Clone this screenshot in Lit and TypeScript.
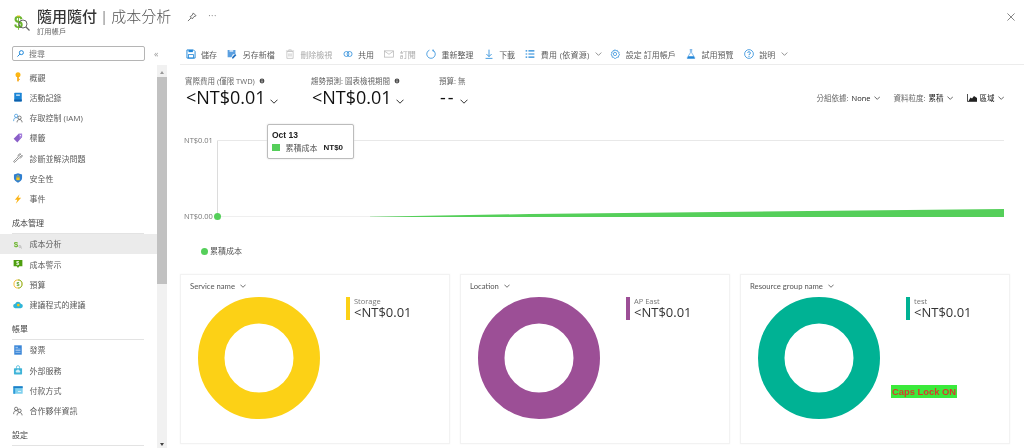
import { LitElement, html, css, svg } from "lit";
import { customElement } from "lit/decorators.js";

const chev = html`<svg class="chev" viewBox="0 0 8 5"><polyline points="0.5,0.7 4,4.2 7.5,0.7"></polyline></svg>`;

const info = html`<svg class="info" viewBox="0 0 8 8"><circle cx="4" cy="4" r="3.2" fill="#4a4a4a"></circle><rect x="3.5" y="3.4" width="1" height="2.6" fill="#fff"></rect><rect x="3.5" y="1.9" width="1" height="1" fill="#fff"></rect></svg>`;

const people = (a: string, b: string) => svg`
  <circle cx="5" cy="4.5" r="2.6" fill="none" stroke=${a} stroke-width="1.2"/>
  <path d="M1 13c0-4 1.5-5.5 4-5.5 1 0 1.6.2 2.2.7" fill="none" stroke=${a} stroke-width="1.2"/>
  <circle cx="10.5" cy="7.5" r="2.6" fill="none" stroke=${b} stroke-width="1.2"/>
  <path d="M6.5 15c0-3 1.500-4.500 4-4.500s4 1.500 4 4.500" fill="none" stroke=${b} stroke-width="1.2"/>`;

const navIcons: Record<string, unknown> = {
  key: svg`<circle cx="8" cy="4.500" r="4" fill="#fcb714"/><rect x="6.700" y="7" width="2.600" height="8" fill="#f7a40f"/><rect x="9" y="11" width="2" height="1.500" fill="#f7a40f"/>`,
  book: svg`<rect x="2" y="1" width="12" height="14" rx="1" fill="#1b85d6"/><rect x="2" y="12" width="12" height="3" fill="#0f5ea8"/><rect x="5" y="4" width="6" height="2" fill="#e6f3fc"/>`,
  iam: people("#3f97dc", "#555"),
  tag: svg`<path d="M9 1h5.500v5.500L7 15 1 9z" fill="#8a5fc8"/><path d="M9 1h5.500v5.500L11 10z" fill="#a57fdc"/><circle cx="11.800" cy="4" r="1" fill="#fff"/>`,
  wrench: svg`<path d="M14.500 3.500 12 6 10 4l2.500-2.500C10 .8 7.500 2.800 8.300 6L1.500 12.800a1.200 1.200 0 0 0 1.700 1.700L10 7.700c3 .8 5.200-1.700 4.500-4.200z" fill="#fff" stroke="#666" stroke-width="1.100"/>`,
  shield: svg`<path d="M8 .5 14.500 2.500V8c0 3.500-3 6-6.500 7.500C4.500 14 1.500 11.500 1.500 8V2.500z" fill="#2f7fd0"/><rect x="5.300" y="7" width="5.400" height="4.500" fill="#f5c518"/><path d="M6.300 7V5.800a1.700 1.700 0 0 1 3.400 0V7" fill="none" stroke="#f5c518" stroke-width="1"/>`,
  bolt: svg`<path d="M10.500.5 3 9h4l-2.500 6.500L13 6H8.500z" fill="#fbb416"/>`,
  cost: svg`<text x="1" y="12" class="dollar" fill="#6cb52d">$</text><circle cx="11" cy="12" r="1.600" fill="none" stroke="#999" stroke-width=".8"/><path d="m12.200 13.200 2 1.800" stroke="#999"/>`,
  alert: svg`<path d="M1 1.500h14v10H10l-2 3-2-3H1z" fill="#4f9f10"/><text x="5" y="10" class="dollar-s" fill="#fff">$</text>`,
  budget: svg`<circle cx="8" cy="8" r="6.500" fill="#fff" stroke="#f2b21b" stroke-width="1.400"/><path d="M8 1.500a6.500 6.500 0 0 1 0 13" fill="none" stroke="#7fba3a" stroke-width="1.400"/><text x="5.400" y="11.500" class="dollar-s" fill="#5f9f2a">$</text>`,
  cloud: svg`<path d="M4 13a3.500 3.500 0 0 1-.5-7A4.800 4.800 0 0 1 12.500 6 3.500 3.500 0 0 1 12 13z" fill="#2fb5d8"/><circle cx="8.500" cy="8" r="2.200" fill="#f5c518"/>`,
  invoice: svg`<rect x="2" y="0.500" width="12" height="15" fill="#3a86d8"/><rect x="4" y="3" width="4" height="1.200" fill="#cfe3f8"/><rect x="4" y="6" width="8" height="1" fill="#cfe3f8"/><rect x="4" y="8.500" width="8" height="1" fill="#cfe3f8"/><rect x="4" y="11" width="8" height="1" fill="#cfe3f8"/>`,
  bag: svg`<rect x="1.500" y="5" width="13" height="10" rx="1" fill="#3fb4d8"/><path d="M5.500 6V3.500a2.500 2.500 0 0 1 5 0V6" fill="none" stroke="#3fb4d8" stroke-width="1.200"/><path d="M5.500 12a1.800 1.800 0 0 1 .4-3.500 2.300 2.300 0 0 1 4.300.2A1.700 1.700 0 0 1 10.500 12z" fill="#d7f1f9"/>`,
  card: svg`<rect x="0.500" y="2" width="15" height="12" rx="1" fill="#7fd0ee"/><rect x="0.500" y="2" width="15" height="3" fill="#1d7fc8"/><rect x="0.500" y="5" width="3" height="9" fill="#2f9ad8"/><rect x="8" y="9.500" width="5" height="1.500" fill="#e8f7fd"/>`,
  partner: people("#555", "#555"),
};

interface Row { label?: string; section?: string; icon?: string; active?: boolean }
const rows: Row[] = [
  { label: "概觀", icon: "key" },
  { label: "活動記錄", icon: "book" },
  { label: "存取控制 (IAM)", icon: "iam" },
  { label: "標籤", icon: "tag" },
  { label: "診斷並解決問題", icon: "wrench" },
  { label: "安全性", icon: "shield" },
  { label: "事件", icon: "bolt" },
  { section: "成本管理" },
  { label: "成本分析", icon: "cost", active: true },
  { label: "成本警示", icon: "alert" },
  { label: "預算", icon: "budget" },
  { label: "建議程式的建議", icon: "cloud" },
  { section: "帳單" },
  { label: "發票", icon: "invoice" },
  { label: "外部服務", icon: "bag" },
  { label: "付款方式", icon: "card" },
  { label: "合作夥伴資訊", icon: "partner" },
  { section: "設定" },
];

const B = "#1f86d8";
interface Tool { label: string; icon: unknown; off?: boolean; menu?: boolean; wide?: boolean }
const tools: Tool[] = [
  { label: "儲存", icon: svg`<path d="M1.500 1.500h10.500l2.500 2.500v10.500h-13z" fill="none" stroke=${B} stroke-width="1.500"/><rect x="4" y="9" width="8" height="5.500" fill="none" stroke=${B} stroke-width="1.300"/><rect x="4" y="1.500" width="7" height="3.500" fill=${B}/>` },
  { label: "另存新檔", icon: svg`<path d="M1 1.500h12.500v7H9.500L7 13H1z" fill="#5a9fe0"/><rect x="4" y="1.500" width="6" height="3" fill="#cfe3f8"/><path d="m8 13 5-5 2 2-5 5H8z" fill="#1f6fc0"/>` },
  { label: "刪除檢視", off: true, icon: svg`<path d="M3 4h10v11H3z" fill="none" stroke="#bbb" stroke-width="1.200"/><path d="M1.500 3h13M6 3V1.200h4V3M6 7v5M8 7v5M10 7v5" fill="none" stroke="#bbb" stroke-width="1"/>` },
  { label: "共用", icon: svg`<circle cx="5.500" cy="8" r="4" fill="none" stroke=${B} stroke-width="1.200"/><circle cx="10.500" cy="8" r="4" fill="none" stroke=${B} stroke-width="1.200"/>` },
  { label: "訂閱", off: true, icon: svg`<rect x="1" y="3" width="14" height="10" fill="none" stroke="#aaa" stroke-width="1"/><path d="m1 3.500 7 5 7-5" fill="none" stroke="#aaa" stroke-width="1"/>` },
  { label: "重新整理", icon: svg`<path d="M5.500 1.800A6.800 6.800 0 1 0 11 2" fill="none" stroke=${B} stroke-width="1.200"/><path d="M11.500.5 10.500 3l2.800.6" fill="none" stroke=${B} stroke-width="1"/>` },
  { label: "下載", icon: svg`<path d="M8 1v11M3.800 8 8 12.200 12.200 8M2.500 15h11" fill="none" stroke=${B} stroke-width="1.300"/>` },
  { label: "費用 (依資源)", menu: true, wide: true, icon: svg`<path d="M1 3h2.500M1 8h2.500M1 13h2.500M5.500 3H15M5.500 8H15M5.500 13H15" fill="none" stroke=${B} stroke-width="1.700"/>` },
  { label: "設定 訂用帳戶", icon: svg`<path d="M8 1l1.500 1.900 2.300-.6.600 2.300 2.300.7-.7 2.300 1.500 1.900-2 1.200.1 2.400-2.400.1L9 15H7l-1.200-1.800-2.400-.1.100-2.400-2-1.200L3 7.600 2.300 5.300l2.300-.7.600-2.300 2.300.6z" fill="none" stroke=${B} stroke-width="1.100"/><circle cx="8" cy="8" r="2.600" fill="none" stroke=${B} stroke-width="1.100"/>` },
  { label: "試用預覽", icon: svg`<path d="M6 1h4M7 1v5l-5 8c-.4.7 0 1.500 1 1.500h10c1 0 1.400-.8 1-1.500L9 6V1" fill="none" stroke="#4f9adf" stroke-width="1.100"/><path d="M3.500 11.500h9l1.500 3.500H2z" fill=${B}/>` },
  { label: "說明", menu: true, icon: svg`<circle cx="8" cy="8" r="7" fill="none" stroke=${B} stroke-width="1.200"/><path d="M5.800 6.200A2.200 2.200 0 1 1 8 8.700V10" fill="none" stroke=${B} stroke-width="1.300"/><rect x="7.300" y="11.200" width="1.400" height="1.500" fill=${B}/>` },
];

const kpis = [
  { label: "實際費用 (僅限 TWD)", value: "<NT$0.01", info: true },
  { label: "趨勢預測: 圖表檢視期間", value: "<NT$0.01", info: true },
  { label: "預算: 無", value: "--", info: false },
];

const cards = [
  { title: "Service name", name: "Storage", color: "#fcd116" },
  { title: "Location", name: "AP East", color: "#9c4f96" },
  { title: "Resource group name", name: "test", color: "#00b294" },
];

@customElement("app-root")
export class AppRoot extends LitElement {
  static styles = css`
    :host {
      display: block;
      width: 1024px;
      height: 448px;
      overflow: hidden;
      background: #fff;
      font-family: "Open Sans", "Noto Sans CJK TC", sans-serif;
      font-size: 8px;
      color: #505050;
      position: relative;
      filter: blur(0.3px);
    }
    svg { display: block; flex: none; }
    .chev { width: 7px; height: 4px; fill: none; stroke: #444; stroke-width: 1; }
    .info { width: 6px; height: 6px; margin-left: 4px; }

    .header { height: 44px; display: flex; box-sizing: border-box; padding: 7px 9px 0 13px; }
    .logo { width: 17px; height: 20px; margin: 6px 7px 0 0; }
    .dollar { font: 700 13px "Liberation Sans", sans-serif; }
    .dollar-s { font: 700 8.5px "Liberation Sans", sans-serif; }
    .titles { display: flex; flex-direction: column; }
    .title { font-size: 15px; line-height: 18px; color: #3a3a3a; white-space: nowrap; display: flex; }
    .title b { font-weight: 500; color: #333; }
    .title .bar { margin: 0 3px; font-weight: 300; }
    .title .light { font-weight: 300; color: #555; }
    .sub { font-size: 7.300px; line-height: 10px; margin-top: 1px; color: #666; }
    .pin { width: 10px; height: 10px; margin: 5px 0 0 16px; }
    .dots { margin: 3px 0 0 11px; font-size: 9px; line-height: 12px; color: #777; letter-spacing: 0.5px; }
    .close { width: 8px; height: 8px; margin: 6px 0 0 auto; fill: none; stroke: #666; stroke-width: 0.900; }

    .body { display: flex; height: 404px; }
    .side { width: 180px; flex: none; display: flex; flex-direction: column; }
    .search-row { display: flex; align-items: center; padding: 2px 0 0 12px; height: 15px; }
    .search { width: 133px; height: 15px; box-sizing: border-box; border: 1px solid #b5b5b5; border-radius: 2px; display: flex; align-items: center; padding-left: 4px; gap: 5px; color: #777; }
    .search svg { width: 7px; height: 7px; fill: none; stroke: #0078d4; stroke-width: 1; }
    .collapse { margin-left: 9px; color: #999; font-size: 9px; line-height: 9px; }
    .side-main { display: flex; flex: 1; margin-top: 4px; min-height: 0; }
    .nav { width: 157px; padding-top: 2px; box-sizing: border-box; }
    .row { height: 20.250px; display: flex; align-items: center; padding-left: 12.500px; gap: 7px; color: #5c5c5c; white-space: nowrap; }
    .row svg { width: 10px; height: 10px; }
    .row.active { background: #ebebeb; }
    .section { height: 25px; box-sizing: border-box; margin: 0 13px 0 12px; padding-top: 9px; line-height: 10px; border-bottom: 1px solid #e3e3e3; color: #444; }
    .scroll { width: 10px; background: #f1f1f1; display: flex; flex-direction: column; align-items: center; position: relative; height: 384px; }
    .up, .down { width: 0; height: 0; border-left: 2.500px solid transparent; border-right: 2.500px solid transparent; }
    .up { border-bottom: 3px solid #999; margin-top: 6px; }
    .thumb { width: 10px; height: 207px; background: #c1c1c1; margin-top: 3px; }
    .down { border-top: 3px solid #444; margin-top: auto; margin-bottom: 3px; }

    .main { flex: 1; min-width: 0; margin-right: 14px; display: flex; flex-direction: column; }
    .toolbar { height: 21px; box-sizing: border-box; margin-right: -14px; padding-left: 5.500px; display: flex; align-items: center; gap: 10.200px; border-bottom: 1px solid #ececec; white-space: nowrap; color: #5c5c5c; }
    .tool { display: flex; align-items: center; gap: 5.500px; }
    .tool > svg:first-child { width: 10px; height: 10px; }
    .tool.off { color: #aaa; }
    .tool.wide { margin-right: -2px; }
    .tool.wide span { letter-spacing: 0.25px; }
    .tool .chev { width: 7px; stroke: #777; }

    .kpi-row { display: flex; gap: 31px; padding: 11px 0 0 5px; height: 39px; position: relative; }
    .kpi:nth-child(1) { width: 95px; }
    .kpi:nth-child(2) { width: 97px; }
    .kpi-label { display: flex; align-items: center; line-height: 10px; color: #666; font-size: 7.500px; white-space: nowrap; }
    .kpi-value { display: flex; align-items: baseline; font-size: 18px; line-height: 23px; color: #111; white-space: nowrap; margin-left: 1px; gap: 4px; }
    .kpi-value .chev { stroke: #333; width: 8px; height: 5px; margin-bottom: 1px; }
    .dash { letter-spacing: 2px; }
    .options { position: absolute; right: 6px; top: 27px; display: flex; gap: 13.500px; color: #666; font-size: 7.500px; white-space: nowrap; }
    .opt { display: flex; align-items: center; gap: 3px; }
    .opt span { color: #222; }
    .opt .chev { width: 6.500px; }
    .area { width: 10px; height: 8px; }

    .chart { position: relative; height: 123px; }
    .plot { position: absolute; left: 0; top: 0; width: 844px; height: 110px; overflow: visible; }
    .tick { font-size: 7.500px; fill: #777; }
    .tip { position: absolute; left: 87px; top: 9px; width: 87px; height: 35px; box-sizing: border-box; border: 1px solid #bcbcbc; border-radius: 2px; background: #fff; padding: 5px 0 0 4px; color: #222; box-shadow: 0 0 2px #ddd; }
    .tip-date { font: 700 8.500px/10px "Liberation Sans", sans-serif; color: #222; }
    .tip-row { display: flex; align-items: center; margin-top: 2px; line-height: 11px; color: #555; }
    .swatch { width: 8px; height: 7px; background: #55cf5a; margin-right: 5.500px; }
    .tip-row b { margin-left: 6px; color: #222; font: 700 8px "Liberation Sans", sans-serif; }
    .legend { position: absolute; left: 21px; top: 131px; display: flex; align-items: center; gap: 2px; color: #555; line-height: 10px; }
    .legend i { width: 7px; height: 7px; border-radius: 50%; background: #55cf5a; }

    .cards { display: grid; grid-template-columns: repeat(3, 270px); gap: 10px; margin-top: 36px; }
    .card { height: 170px; box-sizing: border-box; border: 1px solid #f2f2f2; box-shadow: 0 0 2px #f4f4f4; padding: 6px 0 0 9px; }
    .card-title { display: flex; align-items: center; gap: 5.500px; height: 10px; line-height: 10px; color: #555; white-space: nowrap; font-family: Lato, "Open Sans", sans-serif; font-size: 7.700px; }
    .card-title .chev { width: 6px; }
    .card-body { display: flex; margin-top: 6px; margin-left: 8px; }
    .donut { width: 122px; height: 122px; }
    .item { display: flex; margin: 0 0 0 26px; height: 23px; }
    .swatch-bar { width: 3.500px; height: 23px; margin-right: 4.500px; }
    .item-name { font-size: 7.500px; line-height: 8px; color: #777; }
    .item-val { font-size: 13px; line-height: 15px; color: #333; white-space: nowrap; }

    .caps { position: absolute; left: 891px; top: 385px; height: 13px; width: 66px; background: #3bea3b; color: #d8392b; font: 700 9.400px/13px "Liberation Sans", sans-serif; white-space: nowrap; text-align: center; }
  `;

  private renderRow(r: Row) {
    if (r.section) return html`<div class="section">${r.section}</div>`;
    return html`<div class="row ${r.active ? "active" : ""}">
      <svg viewBox="0 0 16 16">${navIcons[r.icon!]}</svg><span>${r.label}</span>
    </div>`;
  }

  render() {
    return html`
      <div class="header">
        <svg class="logo" viewBox="0 0 17 20">
          <text x="1" y="15" style="font:700 16px 'Liberation Sans',sans-serif" fill="#6cb52d">$</text>
          <path d="M4 3h3" stroke="#f5c518" stroke-width="1"/>
          <circle cx="10" cy="11" r="4" fill="none" stroke="#666" stroke-width="1"/>
          <path d="m13 14 3.500 3.500" stroke="#666" stroke-width="1.200"/>
        </svg>
        <div class="titles">
          <div class="title"><b>隨用隨付</b><span class="bar">|</span><span class="light">成本分析</span></div>
          <div class="sub">訂用帳戶</div>
        </div>
        <svg class="pin" viewBox="0 0 16 16" fill="none" stroke="#555" stroke-width="1.300"><path d="M10 1.500 14.500 6 11 7.500 8.500 11 5 7.500 8.500 5zM6.500 9.500 1.500 14.500"/></svg>
        <div class="dots">···</div>
        <svg class="close" viewBox="0 0 9 9"><path d="M.5.500l8 8M8.500.500l-8 8"/></svg>
      </div>
      <div class="body">
        <div class="side">
          <div class="search-row">
            <div class="search">
              <svg viewBox="0 0 8 8"><circle cx="5" cy="3" r="2.300"></circle><path d="M3.300 4.700.5 7.500"></path></svg>搜尋
            </div>
            <div class="collapse">«</div>
          </div>
          <div class="side-main">
            <div class="nav">${rows.map((r) => this.renderRow(r))}</div>
            <div class="scroll"><div class="up"></div><div class="thumb"></div><div class="down"></div></div>
          </div>
        </div>
        <div class="main">
          <div class="toolbar">
            ${tools.map((t) => html`<div class="tool ${t.off ? "off" : ""} ${t.wide ? "wide" : ""}">
              <svg viewBox="0 0 16 16">${t.icon}</svg><span>${t.label}</span>${t.menu ? chev : ""}
            </div>`)}
          </div>
          <div class="kpi-row">
            ${kpis.map((k) => html`<div class="kpi">
              <div class="kpi-label">${k.label}${k.info ? info : ""}</div>
              <div class="kpi-value"><span class=${k.value === "--" ? "dash" : ""}>${k.value}</span>${chev}</div>
            </div>`)}
            <div class="options">
              <div class="opt">分組依據: <span>None</span>${chev}</div>
              <div class="opt">資料粒度: <span>累積</span>${chev}</div>
              <div class="opt">
                <svg class="area" viewBox="0 0 10 8"><path d="M.5 0v7.500H10" fill="none" stroke="#222" stroke-width=".8"/><path d="M1.500 7 3.500 3.500 5 4.500 7 2l3 2v3z" fill="#222"/></svg>
                <span>區域</span>${chev}
              </div>
            </div>
          </div>
          <div class="chart">
            <svg class="plot" viewBox="0 0 844 110">
              <text class="tick" x="4" y="28">NT$0.01</text>
              <text class="tick" x="4" y="104">NT$0.00</text>
              <line x1="37.500" y1="25.500" x2="37.500" y2="101" stroke="#dcdcdc"></line>
              <line x1="37.500" y1="25.500" x2="824" y2="25.500" stroke="#e8e8e8"></line>
              <line x1="37.500" y1="101.500" x2="824" y2="101.500" stroke="#efefef"></line>
              <polygon points="190,101.800 350,99 824,94 824,102 190,102" fill="#55cf5a"></polygon>
              <circle cx="37.500" cy="101.500" r="3.500" fill="#55cf5a"></circle>
            </svg>
            <div class="tip">
              <div class="tip-date">Oct 13</div>
              <div class="tip-row"><i class="swatch"></i>累積成本<b>NT$0</b></div>
            </div>
            <div class="legend"><i></i>累積成本</div>
          </div>
          <div class="cards">
            ${cards.map((c) => html`<div class="card">
              <div class="card-title">${c.title}${chev}</div>
              <div class="card-body">
                <svg class="donut" viewBox="0 0 122 122"><circle cx="61" cy="61" r="47.750" fill="none" stroke=${c.color} stroke-width="26.500"></circle></svg>
                <div class="item">
                  <div class="swatch-bar" style="background:${c.color}"></div>
                  <div><div class="item-name">${c.name}</div><div class="item-val">&lt;NT$0.01</div></div>
                </div>
              </div>
            </div>`)}
          </div>
        </div>
      </div>
      <div class="caps">Caps Lock ON</div>
    `;
  }
}
